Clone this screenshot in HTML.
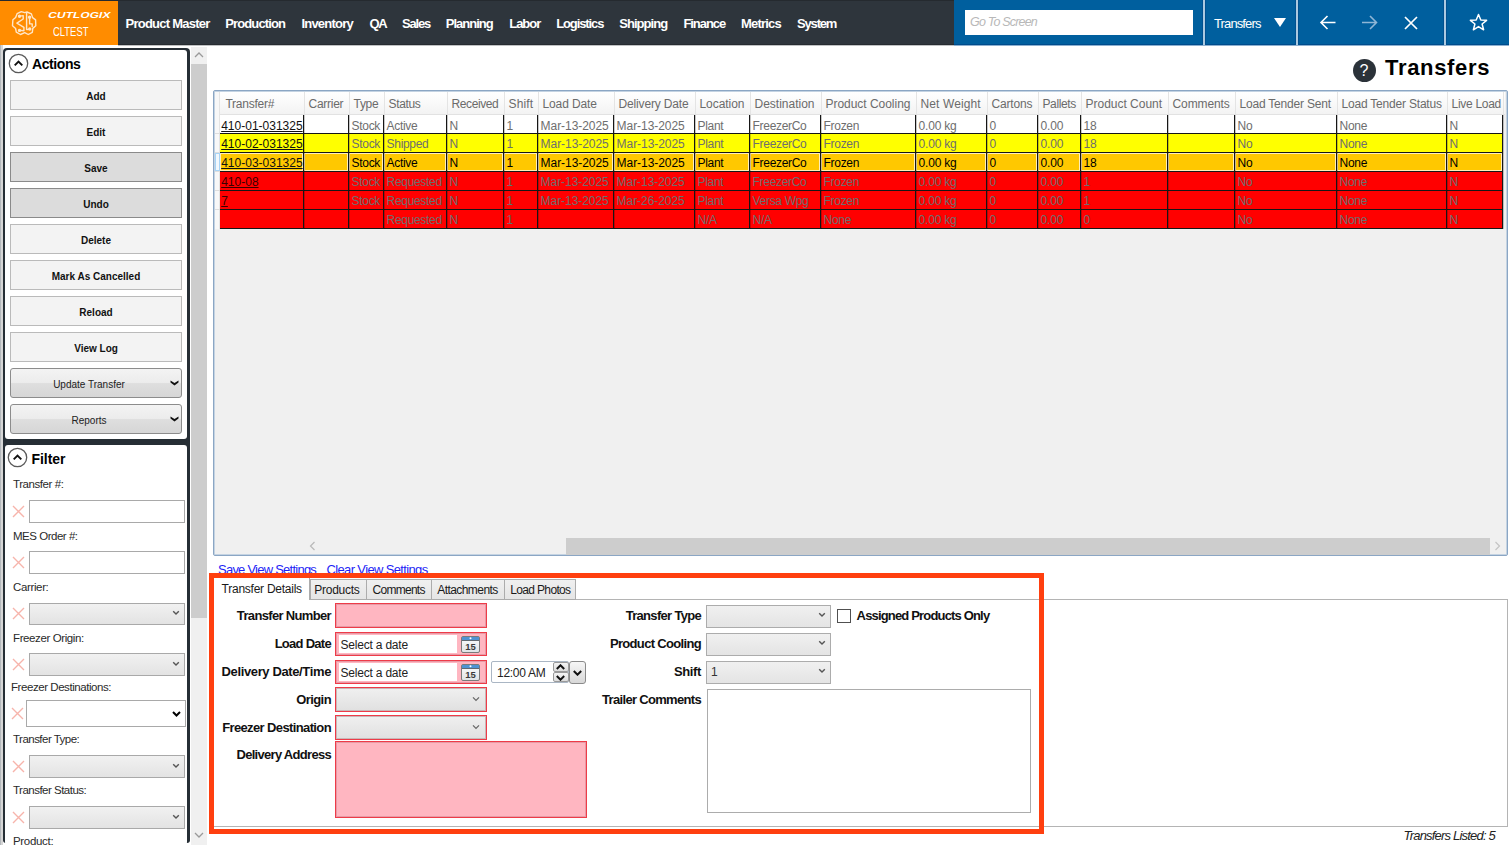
<!DOCTYPE html>
<html><head><meta charset="utf-8">
<style>
*{box-sizing:border-box;}
html,body{margin:0;padding:0;}
body{width:1509px;height:845px;position:relative;overflow:hidden;background:#fff;font-family:"Liberation Sans",sans-serif;color:#000;}
.a{position:absolute;}
.t{position:absolute;white-space:nowrap;}
.nav{position:absolute;top:16px;color:#fff;font-weight:bold;font-size:13px;white-space:nowrap;line-height:15px;}
.btn{position:absolute;left:10px;width:172px;height:30px;background:#f3f3f3;border:1px solid #bababa;font-size:10px;font-weight:bold;text-align:center;line-height:31px;color:#111;}
.btn.dk{background:#dcdcdc;border-color:#8a8a8a;}
.btn.dd{background:linear-gradient(#f3f3f3 0%,#ececec 48%,#dedede 52%,#d6d6d6 100%);border-color:#8c8c8c;border-radius:3px;font-weight:normal;color:#222;}
.flab{position:absolute;font-size:11.5px;letter-spacing:-0.3px;color:#2a2a2a;white-space:nowrap;line-height:13px;}
.finp{position:absolute;left:29px;width:156px;height:23px;border:1px solid #a9a9a9;background:#fff;}
.fcmb{position:absolute;left:29px;width:156px;height:23px;border:1px solid #a9a9a9;background:linear-gradient(#f1f1f1,#e3e3e3);}
.gt{position:absolute;font-size:12px;line-height:14px;white-space:nowrap;letter-spacing:-0.2px;}
.lblb{position:absolute;font-weight:bold;font-size:13px;white-space:nowrap;line-height:15px;color:#111;}
</style></head>
<body>
<div class="a" style="left:0;top:0;width:1509px;height:45px;background:#2e353c;"></div>
<div class="a" style="left:0;top:0;width:954px;height:1px;background:#252a2f;"></div>
<div class="a" style="left:0;top:44px;width:954px;height:1px;background:#262b30;"></div>
<div class="a" style="left:118px;top:45px;width:836px;height:1px;background:rgba(46,53,60,0.3);"></div>
<div class="a" style="left:954px;top:45px;width:555px;height:1px;background:rgba(0,80,150,0.45);"></div>
<div class="a" style="left:0;top:1px;width:118px;height:43.5px;background:#ff8c00;"></div>
<div class="a" style="left:954px;top:0;width:555px;height:45px;background:#005f9e;"></div>
<div class="a" style="left:954px;top:44px;width:555px;height:1px;background:#004c8c;"></div>
<svg class="a" style="left:8px;top:8px;" width="32" height="32" viewBox="0 0 32 32" fill="none" stroke="#ffe6c8" stroke-width="1.4" stroke-linejoin="round" stroke-linecap="round">
<path d="M16.7 4.6 L13.3 3.6 L9.1 5.7 L7.6 9.5 L4.9 11.7 L4.5 17.8 L7.6 20.5 L8.3 24.2 L12.5 26.5 L16.7 24.6 L20.3 26.5 L24.3 24.4 L24.8 20.4 L27.8 17.8 L27.6 11.9 L24.6 9.6 L23.4 5.9 L19 4 Z"/>
<path d="M11.7 8.1 L15.2 7.6 L15.2 11 L8.9 15.2 L15.9 19.3 L15.9 22.7 L11.7 22.4"/>
<path d="M18.6 4.8 L18.6 21.6 L21.6 21.2"/>
<path d="M21.6 9.5 L21.6 15.9 L24.2 15.9 L24.2 18.5"/>
<circle cx="11.5" cy="8.2" r="1" fill="#ffe6c8"/><circle cx="11.5" cy="22.4" r="1" fill="#ffe6c8"/><circle cx="21.6" cy="9.3" r="1" fill="#ffe6c8"/><circle cx="21.8" cy="21" r="1" fill="#ffe6c8"/>
</svg>
<div class="t" style="left:47px;top:10px;font-size:8.6px;font-weight:bold;color:#fff;line-height:10px;transform:scaleX(1.375) skewX(-12deg);transform-origin:0 100%;letter-spacing:0.1px;">CUTLOGIX</div>
<div class="t" style="left:52.5px;top:25px;font-size:13px;color:#fff;line-height:14px;transform:scaleX(0.725);transform-origin:0 0;">CLTEST</div>
<div class="nav" id="n1" style="left:125.5px;letter-spacing:-0.76px;">Product Master</div>
<div class="nav" id="n2" style="left:225.3px;letter-spacing:-0.89px;">Production</div>
<div class="nav" id="n3" style="left:301.4px;letter-spacing:-0.77px;">Inventory</div>
<div class="nav" id="n4" style="left:369.4px;letter-spacing:-1.20px;">QA</div>
<div class="nav" id="n5" style="left:402.0px;letter-spacing:-1.20px;">Sales</div>
<div class="nav" id="n6" style="left:445.7px;letter-spacing:-0.98px;">Planning</div>
<div class="nav" id="n7" style="left:509.2px;letter-spacing:-1.00px;">Labor</div>
<div class="nav" id="n8" style="left:556.2px;letter-spacing:-1.11px;">Logistics</div>
<div class="nav" id="n9" style="left:619.2px;letter-spacing:-0.95px;">Shipping</div>
<div class="nav" id="n10" style="left:683.4px;letter-spacing:-1.05px;">Finance</div>
<div class="nav" id="n11" style="left:741.1px;letter-spacing:-0.82px;">Metrics</div>
<div class="nav" id="n12" style="left:797.1px;letter-spacing:-1.19px;">System</div>
<div class="a" style="left:965px;top:10px;width:228px;height:25px;background:#fff;"></div>
<div class="t" id="gts" style="left:970px;top:15px;font-size:12.5px;font-style:italic;color:#b8b8b8;line-height:14px;letter-spacing:-0.81px;">Go To Screen</div>
<div class="a" style="left:1203px;top:0;width:2px;height:45px;background:#abc9e0;box-shadow:-1px 0 0 #00508f,1px 0 0 #00508f;"></div>
<div class="a" style="left:1296px;top:0;width:2px;height:45px;background:#abc9e0;box-shadow:-1px 0 0 #00508f,1px 0 0 #00508f;"></div>
<div class="a" style="left:1444px;top:0;width:2px;height:45px;background:#abc9e0;box-shadow:-1px 0 0 #00508f,1px 0 0 #00508f;"></div>
<div class="t" id="tr1" style="left:1214px;top:16px;font-size:13px;color:#fff;line-height:15px;letter-spacing:-0.88px;">Transfers</div>
<svg class="a" style="left:1274px;top:18px;" width="12" height="9" viewBox="0 0 12 9"><path d="M0 0 L12 0 L6 9 Z" fill="#fff"/></svg>
<svg class="a" style="left:1319px;top:14px;" width="18" height="17" viewBox="0 0 18 17" fill="none" stroke="#fff" stroke-width="1.6"><path d="M16.5 8.5 L2 8.5 M8.5 2 L2 8.5 L8.5 15"/></svg>
<svg class="a" style="left:1361px;top:14px;" width="18" height="17" viewBox="0 0 18 17" fill="none" stroke="#8fb6d6" stroke-width="1.6"><path d="M1 8.5 L15.5 8.5 M9 2 L15.5 8.5 L9 15"/></svg>
<svg class="a" style="left:1403px;top:15px;" width="16" height="16" viewBox="0 0 16 16" fill="none" stroke="#fff" stroke-width="1.7"><path d="M2 2 L14 14 M14 2 L2 14"/></svg>
<svg class="a" style="left:1469px;top:13px;" width="19" height="19" viewBox="0 0 19 19" fill="none" stroke="#fff" stroke-width="1.5" stroke-linejoin="round"><path d="M9.5 1.5 L11.8 7 L17.6 7.3 L13.1 11 L14.6 16.8 L9.5 13.6 L4.4 16.8 L5.9 11 L1.4 7.3 L7.2 7 Z"/></svg>
<div class="a" style="left:0;top:45px;width:1px;height:800px;background:#b4b8bc;"></div>
<div class="a" style="left:1px;top:45px;width:2px;height:800px;background:#d6d6d6;"></div>
<div class="a" style="left:3px;top:48px;width:187px;height:795px;background:#262e35;border-radius:4px 4px 3px 3px;"></div>
<div class="a" style="left:5px;top:50px;width:182px;height:389px;background:#fff;border-radius:3px;"></div>
<div class="a" style="left:5px;top:445px;width:182px;height:400px;background:#fff;border-radius:3px;"></div>
<div class="a" style="left:191px;top:47px;width:16px;height:798px;background:#f0f0f0;"></div>
<div class="a" style="left:191px;top:64px;width:16px;height:554px;background:#cdcdcd;"></div>
<svg class="a" style="left:194px;top:51px;" width="10" height="7" viewBox="0 0 10 7"><path d="M1 6 L5 2 L9 6" fill="none" stroke="#9a9a9a" stroke-width="1.3"/></svg>
<svg class="a" style="left:194px;top:832px;" width="10" height="7" viewBox="0 0 10 7"><path d="M1 1 L5 5 L9 1" fill="none" stroke="#9a9a9a" stroke-width="1.3"/></svg>
<svg class="a" style="left:7.5px;top:52.5px;" width="21" height="21" viewBox="0 0 21 21"><circle cx="10.5" cy="10.5" r="9.2" fill="none" stroke="#5a5a5a" stroke-width="1.3"/><path d="M6.7 12.3 L10.5 8.5 L14.3 12.3" fill="none" stroke="#111" stroke-width="1.9"/></svg>
<div class="t" id="act" style="left:32px;top:56px;font-size:14px;font-weight:bold;line-height:16px;letter-spacing:-0.41px;">Actions</div>
<div class="btn" style="top:80px;">Add</div>
<div class="btn" style="top:116px;">Edit</div>
<div class="btn dk" style="top:152px;">Save</div>
<div class="btn dk" style="top:188px;">Undo</div>
<div class="btn" style="top:224px;">Delete</div>
<div class="btn" style="top:260px;">Mark As Cancelled</div>
<div class="btn" style="top:296px;">Reload</div>
<div class="btn" style="top:332px;">View Log</div>
<div class="btn dd" style="top:368px;padding-right:14px;">Update Transfer</div>
<svg class="a" style="left:170px;top:380px;" width="9" height="6" viewBox="0 0 9 6"><path d="M0.5 0.5 L4.5 3 L8.5 0.5 L8.5 2.5 L4.5 5.5 L0.5 2.5 Z" fill="#111"/></svg>
<div class="btn dd" style="top:404px;padding-right:14px;">Reports</div>
<svg class="a" style="left:170px;top:416px;" width="9" height="6" viewBox="0 0 9 6"><path d="M0.5 0.5 L4.5 3 L8.5 0.5 L8.5 2.5 L4.5 5.5 L0.5 2.5 Z" fill="#111"/></svg>
<svg class="a" style="left:7.0px;top:447.0px;" width="21" height="21" viewBox="0 0 21 21"><circle cx="10.5" cy="10.5" r="9.2" fill="none" stroke="#5a5a5a" stroke-width="1.3"/><path d="M6.7 12.3 L10.5 8.5 L14.3 12.3" fill="none" stroke="#111" stroke-width="1.9"/></svg>
<div class="t" id="flt" style="left:31.5px;top:450.5px;font-size:14px;font-weight:bold;line-height:16px;letter-spacing:-0.06px;">Filter</div>
<div class="flab" id="fl480" style="left:13px;top:478.1px;letter-spacing:-0.43px;">Transfer #:</div>
<div class="finp" style="top:500.0px;height:23.0px;"></div>
<svg class="a" style="left:12px;top:505px;" width="13" height="13" viewBox="0 0 13 13"><path d="M1 1 L12 12 M12 1 L1 12" stroke="#f7b4ab" stroke-width="1.4"/></svg>
<div class="flab" id="fl532" style="left:13px;top:529.5px;letter-spacing:-0.48px;">MES Order #:</div>
<div class="finp" style="top:551.0px;height:23.0px;"></div>
<svg class="a" style="left:12px;top:556px;" width="13" height="13" viewBox="0 0 13 13"><path d="M1 1 L12 12 M12 1 L1 12" stroke="#f7b4ab" stroke-width="1.4"/></svg>
<div class="flab" id="fl583" style="left:13px;top:581.0px;letter-spacing:-0.36px;">Carrier:</div>
<div class="fcmb" style="top:602.5px;height:22.5px;"></div>
<svg class="a" style="left:172px;top:610px;" width="8" height="6" viewBox="0 0 8 6"><path d="M1.2 1.2 L4 4 L6.8 1.2" fill="none" stroke="#555" stroke-width="1.4"/></svg>
<svg class="a" style="left:12px;top:607px;" width="13" height="13" viewBox="0 0 13 13"><path d="M1 1 L12 12 M12 1 L1 12" stroke="#f7b4ab" stroke-width="1.4"/></svg>
<div class="flab" id="fl634" style="left:13px;top:631.5px;letter-spacing:-0.39px;">Freezer Origin:</div>
<div class="fcmb" style="top:653.0px;height:22.5px;"></div>
<svg class="a" style="left:172px;top:661px;" width="8" height="6" viewBox="0 0 8 6"><path d="M1.2 1.2 L4 4 L6.8 1.2" fill="none" stroke="#555" stroke-width="1.4"/></svg>
<svg class="a" style="left:12px;top:658px;" width="13" height="13" viewBox="0 0 13 13"><path d="M1 1 L12 12 M12 1 L1 12" stroke="#f7b4ab" stroke-width="1.4"/></svg>
<div class="flab" id="fl683" style="left:11px;top:680.5px;letter-spacing:-0.44px;">Freezer Destinations:</div>
<div class="finp" style="left:25.5px;width:160px;top:700.0px;height:26.5px;"></div>
<svg class="a" style="left:172px;top:711px;" width="9" height="6" viewBox="0 0 9 6"><path d="M1 1 L4.5 4.5 L8 1" fill="none" stroke="#000" stroke-width="2"/></svg>
<svg class="a" style="left:11px;top:707px;" width="13" height="13" viewBox="0 0 13 13"><path d="M1 1 L12 12 M12 1 L1 12" stroke="#f7b4ab" stroke-width="1.4"/></svg>
<div class="flab" id="fl735" style="left:13px;top:733.2px;letter-spacing:-0.52px;">Transfer Type:</div>
<div class="fcmb" style="top:755.0px;height:22.5px;"></div>
<svg class="a" style="left:172px;top:763px;" width="8" height="6" viewBox="0 0 8 6"><path d="M1.2 1.2 L4 4 L6.8 1.2" fill="none" stroke="#555" stroke-width="1.4"/></svg>
<svg class="a" style="left:12px;top:760px;" width="13" height="13" viewBox="0 0 13 13"><path d="M1 1 L12 12 M12 1 L1 12" stroke="#f7b4ab" stroke-width="1.4"/></svg>
<div class="flab" id="fl786" style="left:13px;top:784.3px;letter-spacing:-0.51px;">Transfer Status:</div>
<div class="fcmb" style="top:806.0px;height:22.5px;"></div>
<svg class="a" style="left:172px;top:814px;" width="8" height="6" viewBox="0 0 8 6"><path d="M1.2 1.2 L4 4 L6.8 1.2" fill="none" stroke="#555" stroke-width="1.4"/></svg>
<svg class="a" style="left:12px;top:811px;" width="13" height="13" viewBox="0 0 13 13"><path d="M1 1 L12 12 M12 1 L1 12" stroke="#f7b4ab" stroke-width="1.4"/></svg>
<div class="flab" id="fl837" style="left:13px;top:834.5px;letter-spacing:-0.32px;">Product:</div>
<div class="a" style="left:1352.5px;top:58.5px;width:23px;height:23px;border-radius:50%;background:#2b3239;color:#fff;font-size:16px;text-align:center;line-height:23px;">?</div>
<div class="t" id="ttl" style="left:1385px;top:56px;font-size:22px;font-weight:bold;line-height:24px;letter-spacing:0.68px;">Transfers</div>
<div class="a" style="left:213px;top:90px;width:1295px;height:466px;border:1px solid #8ba6c4;border-radius:2px;background:#f0f0f0;box-shadow:inset 0 0 0 1px #c4d3e2;"></div>
<div class="a" style="left:215px;top:92px;width:1290px;height:23px;background:linear-gradient(#ffffff,#f3f3f3);border-bottom:1px solid #e2e2e2;"></div>
<div class="a" style="left:215px;top:92px;width:5px;height:137px;background:#f8f8f8;border-right:1px solid #e4e4e4;"></div>
<div class="a" style="left:304px;top:92px;width:1px;height:22px;background:#e4e4e4;"></div>
<div class="gt" id="h0" style="left:225.5px;top:97px;color:#6b6b6b;letter-spacing:-0.26px;">Transfer#</div>
<div class="a" style="left:349px;top:92px;width:1px;height:22px;background:#e4e4e4;"></div>
<div class="gt" id="h1" style="left:308.5px;top:97px;color:#6b6b6b;letter-spacing:-0.27px;">Carrier</div>
<div class="a" style="left:384px;top:92px;width:1px;height:22px;background:#e4e4e4;"></div>
<div class="gt" id="h2" style="left:353.5px;top:97px;color:#6b6b6b;letter-spacing:-0.28px;">Type</div>
<div class="a" style="left:447px;top:92px;width:1px;height:22px;background:#e4e4e4;"></div>
<div class="gt" id="h3" style="left:388.5px;top:97px;color:#6b6b6b;letter-spacing:-0.34px;">Status</div>
<div class="a" style="left:504px;top:92px;width:1px;height:22px;background:#e4e4e4;"></div>
<div class="gt" id="h4" style="left:451.5px;top:97px;color:#6b6b6b;letter-spacing:-0.40px;">Received</div>
<div class="a" style="left:538px;top:92px;width:1px;height:22px;background:#e4e4e4;"></div>
<div class="gt" id="h5" style="left:508.5px;top:97px;color:#6b6b6b;letter-spacing:0.14px;">Shift</div>
<div class="a" style="left:614px;top:92px;width:1px;height:22px;background:#e4e4e4;"></div>
<div class="gt" id="h6" style="left:542.5px;top:97px;color:#6b6b6b;letter-spacing:-0.13px;">Load Date</div>
<div class="a" style="left:695px;top:92px;width:1px;height:22px;background:#e4e4e4;"></div>
<div class="gt" id="h7" style="left:618.5px;top:97px;color:#6b6b6b;letter-spacing:-0.15px;">Delivery Date</div>
<div class="a" style="left:750px;top:92px;width:1px;height:22px;background:#e4e4e4;"></div>
<div class="gt" id="h8" style="left:699.5px;top:97px;color:#6b6b6b;letter-spacing:-0.06px;">Location</div>
<div class="a" style="left:821px;top:92px;width:1px;height:22px;background:#e4e4e4;"></div>
<div class="gt" id="h9" style="left:754.5px;top:97px;color:#6b6b6b;letter-spacing:0.00px;">Destination</div>
<div class="a" style="left:916px;top:92px;width:1px;height:22px;background:#e4e4e4;"></div>
<div class="gt" id="h10" style="left:825.5px;top:97px;color:#6b6b6b;letter-spacing:-0.03px;">Product Cooling</div>
<div class="a" style="left:987px;top:92px;width:1px;height:22px;background:#e4e4e4;"></div>
<div class="gt" id="h11" style="left:920.5px;top:97px;color:#6b6b6b;letter-spacing:0.11px;">Net Weight</div>
<div class="a" style="left:1038px;top:92px;width:1px;height:22px;background:#e4e4e4;"></div>
<div class="gt" id="h12" style="left:991.5px;top:97px;color:#6b6b6b;letter-spacing:-0.19px;">Cartons</div>
<div class="a" style="left:1081px;top:92px;width:1px;height:22px;background:#e4e4e4;"></div>
<div class="gt" id="h13" style="left:1042.5px;top:97px;color:#6b6b6b;letter-spacing:-0.39px;">Pallets</div>
<div class="a" style="left:1168px;top:92px;width:1px;height:22px;background:#e4e4e4;"></div>
<div class="gt" id="h14" style="left:1085.5px;top:97px;color:#6b6b6b;letter-spacing:-0.01px;">Product Count</div>
<div class="a" style="left:1235px;top:92px;width:1px;height:22px;background:#e4e4e4;"></div>
<div class="gt" id="h15" style="left:1172.5px;top:97px;color:#6b6b6b;letter-spacing:-0.10px;">Comments</div>
<div class="a" style="left:1337px;top:92px;width:1px;height:22px;background:#e4e4e4;"></div>
<div class="gt" id="h16" style="left:1239.5px;top:97px;color:#6b6b6b;letter-spacing:-0.20px;">Load Tender Sent</div>
<div class="a" style="left:1447px;top:92px;width:1px;height:22px;background:#e4e4e4;"></div>
<div class="gt" id="h17" style="left:1341.5px;top:97px;color:#6b6b6b;letter-spacing:-0.20px;">Load Tender Status</div>
<div class="a" style="left:1503px;top:92px;width:1px;height:22px;background:#e4e4e4;"></div>
<div class="gt" id="h18" style="left:1451.5px;top:97px;color:#6b6b6b;letter-spacing:-0.29px;">Live Load</div>
<div class="a" style="left:220px;top:115px;width:1283px;height:18px;background:#ffffff;"></div>
<div class="gt" style="left:221.2px;top:119px;color:#111;text-decoration:underline;letter-spacing:0;">410-01-031325</div>
<div class="gt" style="left:351.6px;top:119px;color:#6e6e6e;letter-spacing:-0.32px;">Stock</div>
<div class="gt" style="left:386.6px;top:119px;color:#6e6e6e;letter-spacing:-0.32px;">Active</div>
<div class="gt" style="left:449.6px;top:119px;color:#6e6e6e;letter-spacing:-0.32px;">N</div>
<div class="gt" style="left:506.6px;top:119px;color:#6e6e6e;letter-spacing:-0.20px;">1</div>
<div class="gt" style="left:540.6px;top:119px;color:#6e6e6e;letter-spacing:-0.05px;">Mar-13-2025</div>
<div class="gt" style="left:616.6px;top:119px;color:#6e6e6e;letter-spacing:-0.05px;">Mar-13-2025</div>
<div class="gt" style="left:697.6px;top:119px;color:#6e6e6e;letter-spacing:-0.32px;">Plant</div>
<div class="gt" style="left:752.6px;top:119px;color:#6e6e6e;letter-spacing:-0.32px;">FreezerCo</div>
<div class="gt" style="left:823.6px;top:119px;color:#6e6e6e;letter-spacing:-0.32px;">Frozen</div>
<div class="gt" style="left:918.6px;top:119px;color:#6e6e6e;letter-spacing:-0.20px;">0.00 kg</div>
<div class="gt" style="left:989.6px;top:119px;color:#6e6e6e;letter-spacing:-0.20px;">0</div>
<div class="gt" style="left:1040.6px;top:119px;color:#6e6e6e;letter-spacing:-0.20px;">0.00</div>
<div class="gt" style="left:1083.6px;top:119px;color:#6e6e6e;letter-spacing:-0.20px;">18</div>
<div class="gt" style="left:1237.6px;top:119px;color:#6e6e6e;letter-spacing:-0.32px;">No</div>
<div class="gt" style="left:1339.6px;top:119px;color:#6e6e6e;letter-spacing:-0.32px;">None</div>
<div class="gt" style="left:1449.6px;top:119px;color:#6e6e6e;letter-spacing:-0.32px;">N</div>
<div class="a" style="left:220px;top:134px;width:1283px;height:18px;background:#ffff00;"></div>
<div class="gt" style="left:221.2px;top:137px;color:#111;text-decoration:underline;letter-spacing:0;">410-02-031325</div>
<div class="gt" style="left:351.6px;top:137px;color:#6e6e6e;letter-spacing:-0.32px;">Stock</div>
<div class="gt" style="left:386.6px;top:137px;color:#6e6e6e;letter-spacing:-0.32px;">Shipped</div>
<div class="gt" style="left:449.6px;top:137px;color:#6e6e6e;letter-spacing:-0.32px;">N</div>
<div class="gt" style="left:506.6px;top:137px;color:#6e6e6e;letter-spacing:-0.20px;">1</div>
<div class="gt" style="left:540.6px;top:137px;color:#6e6e6e;letter-spacing:-0.05px;">Mar-13-2025</div>
<div class="gt" style="left:616.6px;top:137px;color:#6e6e6e;letter-spacing:-0.05px;">Mar-13-2025</div>
<div class="gt" style="left:697.6px;top:137px;color:#6e6e6e;letter-spacing:-0.32px;">Plant</div>
<div class="gt" style="left:752.6px;top:137px;color:#6e6e6e;letter-spacing:-0.32px;">FreezerCo</div>
<div class="gt" style="left:823.6px;top:137px;color:#6e6e6e;letter-spacing:-0.32px;">Frozen</div>
<div class="gt" style="left:918.6px;top:137px;color:#6e6e6e;letter-spacing:-0.20px;">0.00 kg</div>
<div class="gt" style="left:989.6px;top:137px;color:#6e6e6e;letter-spacing:-0.20px;">0</div>
<div class="gt" style="left:1040.6px;top:137px;color:#6e6e6e;letter-spacing:-0.20px;">0.00</div>
<div class="gt" style="left:1083.6px;top:137px;color:#6e6e6e;letter-spacing:-0.20px;">18</div>
<div class="gt" style="left:1237.6px;top:137px;color:#6e6e6e;letter-spacing:-0.32px;">No</div>
<div class="gt" style="left:1339.6px;top:137px;color:#6e6e6e;letter-spacing:-0.32px;">None</div>
<div class="gt" style="left:1449.6px;top:137px;color:#6e6e6e;letter-spacing:-0.32px;">N</div>
<div class="a" style="left:220px;top:153px;width:1283px;height:18px;background:#ffc800;"></div>
<div class="a" style="left:220px;top:153px;width:83px;height:18px;border:1px solid #ffeebb;"></div>
<div class="a" style="left:304px;top:153px;width:44px;height:18px;border:1px solid #ffeebb;"></div>
<div class="a" style="left:349px;top:153px;width:34px;height:18px;border:1px solid #ffeebb;"></div>
<div class="a" style="left:384px;top:153px;width:62px;height:18px;border:1px solid #ffeebb;"></div>
<div class="a" style="left:447px;top:153px;width:56px;height:18px;border:1px solid #ffeebb;"></div>
<div class="a" style="left:504px;top:153px;width:33px;height:18px;border:1px solid #ffeebb;"></div>
<div class="a" style="left:538px;top:153px;width:75px;height:18px;border:1px solid #ffeebb;"></div>
<div class="a" style="left:614px;top:153px;width:80px;height:18px;border:1px solid #ffeebb;"></div>
<div class="a" style="left:695px;top:153px;width:54px;height:18px;border:1px solid #ffeebb;"></div>
<div class="a" style="left:750px;top:153px;width:70px;height:18px;border:1px solid #ffeebb;"></div>
<div class="a" style="left:821px;top:153px;width:94px;height:18px;border:1px solid #ffeebb;"></div>
<div class="a" style="left:916px;top:153px;width:70px;height:18px;border:1px solid #ffeebb;"></div>
<div class="a" style="left:987px;top:153px;width:50px;height:18px;border:1px solid #ffeebb;"></div>
<div class="a" style="left:1038px;top:153px;width:42px;height:18px;border:1px solid #ffeebb;"></div>
<div class="a" style="left:1081px;top:153px;width:86px;height:18px;border:1px solid #ffeebb;"></div>
<div class="a" style="left:1168px;top:153px;width:66px;height:18px;border:1px solid #ffeebb;"></div>
<div class="a" style="left:1235px;top:153px;width:101px;height:18px;border:1px solid #ffeebb;"></div>
<div class="a" style="left:1337px;top:153px;width:109px;height:18px;border:1px solid #ffeebb;"></div>
<div class="a" style="left:1447px;top:153px;width:55px;height:18px;border:1px solid #ffeebb;"></div>
<div class="gt" style="left:221.2px;top:156px;color:#111;text-decoration:underline;letter-spacing:0;">410-03-031325</div>
<div class="gt" style="left:351.6px;top:156px;color:#000;letter-spacing:-0.32px;">Stock</div>
<div class="gt" style="left:386.6px;top:156px;color:#000;letter-spacing:-0.32px;">Active</div>
<div class="gt" style="left:449.6px;top:156px;color:#000;letter-spacing:-0.32px;">N</div>
<div class="gt" style="left:506.6px;top:156px;color:#000;letter-spacing:-0.20px;">1</div>
<div class="gt" style="left:540.6px;top:156px;color:#000;letter-spacing:-0.05px;">Mar-13-2025</div>
<div class="gt" style="left:616.6px;top:156px;color:#000;letter-spacing:-0.05px;">Mar-13-2025</div>
<div class="gt" style="left:697.6px;top:156px;color:#000;letter-spacing:-0.32px;">Plant</div>
<div class="gt" style="left:752.6px;top:156px;color:#000;letter-spacing:-0.32px;">FreezerCo</div>
<div class="gt" style="left:823.6px;top:156px;color:#000;letter-spacing:-0.32px;">Frozen</div>
<div class="gt" style="left:918.6px;top:156px;color:#000;letter-spacing:-0.20px;">0.00 kg</div>
<div class="gt" style="left:989.6px;top:156px;color:#000;letter-spacing:-0.20px;">0</div>
<div class="gt" style="left:1040.6px;top:156px;color:#000;letter-spacing:-0.20px;">0.00</div>
<div class="gt" style="left:1083.6px;top:156px;color:#000;letter-spacing:-0.20px;">18</div>
<div class="gt" style="left:1237.6px;top:156px;color:#000;letter-spacing:-0.32px;">No</div>
<div class="gt" style="left:1339.6px;top:156px;color:#000;letter-spacing:-0.32px;">None</div>
<div class="gt" style="left:1449.6px;top:156px;color:#000;letter-spacing:-0.32px;">N</div>
<div class="a" style="left:220px;top:172px;width:1283px;height:18px;background:#ff0000;"></div>
<div class="gt" style="left:221.2px;top:175px;color:#3a0000;text-decoration:underline;letter-spacing:0;">410-08</div>
<div class="gt" style="left:351.6px;top:175px;color:#6e6e6e;letter-spacing:-0.32px;">Stock</div>
<div class="gt" style="left:386.6px;top:175px;color:#6e6e6e;letter-spacing:-0.32px;">Requested</div>
<div class="gt" style="left:449.6px;top:175px;color:#6e6e6e;letter-spacing:-0.32px;">N</div>
<div class="gt" style="left:506.6px;top:175px;color:#6e6e6e;letter-spacing:-0.20px;">1</div>
<div class="gt" style="left:540.6px;top:175px;color:#6e6e6e;letter-spacing:-0.05px;">Mar-13-2025</div>
<div class="gt" style="left:616.6px;top:175px;color:#6e6e6e;letter-spacing:-0.05px;">Mar-13-2025</div>
<div class="gt" style="left:697.6px;top:175px;color:#6e6e6e;letter-spacing:-0.32px;">Plant</div>
<div class="gt" style="left:752.6px;top:175px;color:#6e6e6e;letter-spacing:-0.32px;">FreezerCo</div>
<div class="gt" style="left:823.6px;top:175px;color:#6e6e6e;letter-spacing:-0.32px;">Frozen</div>
<div class="gt" style="left:918.6px;top:175px;color:#6e6e6e;letter-spacing:-0.20px;">0.00 kg</div>
<div class="gt" style="left:989.6px;top:175px;color:#6e6e6e;letter-spacing:-0.20px;">0</div>
<div class="gt" style="left:1040.6px;top:175px;color:#6e6e6e;letter-spacing:-0.20px;">0.00</div>
<div class="gt" style="left:1083.6px;top:175px;color:#6e6e6e;letter-spacing:-0.20px;">1</div>
<div class="gt" style="left:1237.6px;top:175px;color:#6e6e6e;letter-spacing:-0.32px;">No</div>
<div class="gt" style="left:1339.6px;top:175px;color:#6e6e6e;letter-spacing:-0.32px;">None</div>
<div class="gt" style="left:1449.6px;top:175px;color:#6e6e6e;letter-spacing:-0.32px;">N</div>
<div class="a" style="left:220px;top:191px;width:1283px;height:18px;background:#ff0000;"></div>
<div class="gt" style="left:221.2px;top:194px;color:#3a0000;text-decoration:underline;letter-spacing:0;">7</div>
<div class="gt" style="left:351.6px;top:194px;color:#6e6e6e;letter-spacing:-0.32px;">Stock</div>
<div class="gt" style="left:386.6px;top:194px;color:#6e6e6e;letter-spacing:-0.32px;">Requested</div>
<div class="gt" style="left:449.6px;top:194px;color:#6e6e6e;letter-spacing:-0.32px;">N</div>
<div class="gt" style="left:506.6px;top:194px;color:#6e6e6e;letter-spacing:-0.20px;">1</div>
<div class="gt" style="left:540.6px;top:194px;color:#6e6e6e;letter-spacing:-0.05px;">Mar-13-2025</div>
<div class="gt" style="left:616.6px;top:194px;color:#6e6e6e;letter-spacing:-0.05px;">Mar-26-2025</div>
<div class="gt" style="left:697.6px;top:194px;color:#6e6e6e;letter-spacing:-0.32px;">Plant</div>
<div class="gt" style="left:752.6px;top:194px;color:#6e6e6e;letter-spacing:-0.32px;">Versa Wpg</div>
<div class="gt" style="left:823.6px;top:194px;color:#6e6e6e;letter-spacing:-0.32px;">Frozen</div>
<div class="gt" style="left:918.6px;top:194px;color:#6e6e6e;letter-spacing:-0.20px;">0.00 kg</div>
<div class="gt" style="left:989.6px;top:194px;color:#6e6e6e;letter-spacing:-0.20px;">0</div>
<div class="gt" style="left:1040.6px;top:194px;color:#6e6e6e;letter-spacing:-0.20px;">0.00</div>
<div class="gt" style="left:1083.6px;top:194px;color:#6e6e6e;letter-spacing:-0.20px;">1</div>
<div class="gt" style="left:1237.6px;top:194px;color:#6e6e6e;letter-spacing:-0.32px;">No</div>
<div class="gt" style="left:1339.6px;top:194px;color:#6e6e6e;letter-spacing:-0.32px;">None</div>
<div class="gt" style="left:1449.6px;top:194px;color:#6e6e6e;letter-spacing:-0.32px;">N</div>
<div class="a" style="left:220px;top:210px;width:1283px;height:18px;background:#ff0000;"></div>
<div class="gt" style="left:386.6px;top:213px;color:#6e6e6e;letter-spacing:-0.32px;">Requested</div>
<div class="gt" style="left:449.6px;top:213px;color:#6e6e6e;letter-spacing:-0.32px;">N</div>
<div class="gt" style="left:506.6px;top:213px;color:#6e6e6e;letter-spacing:-0.20px;">1</div>
<div class="gt" style="left:697.6px;top:213px;color:#6e6e6e;letter-spacing:-0.32px;">N/A</div>
<div class="gt" style="left:752.6px;top:213px;color:#6e6e6e;letter-spacing:-0.32px;">N/A</div>
<div class="gt" style="left:823.6px;top:213px;color:#6e6e6e;letter-spacing:-0.32px;">None</div>
<div class="gt" style="left:918.6px;top:213px;color:#6e6e6e;letter-spacing:-0.20px;">0.00 kg</div>
<div class="gt" style="left:989.6px;top:213px;color:#6e6e6e;letter-spacing:-0.20px;">0</div>
<div class="gt" style="left:1040.6px;top:213px;color:#6e6e6e;letter-spacing:-0.20px;">0.00</div>
<div class="gt" style="left:1083.6px;top:213px;color:#6e6e6e;letter-spacing:-0.20px;">0</div>
<div class="gt" style="left:1237.6px;top:213px;color:#6e6e6e;letter-spacing:-0.32px;">No</div>
<div class="gt" style="left:1339.6px;top:213px;color:#6e6e6e;letter-spacing:-0.32px;">None</div>
<div class="gt" style="left:1449.6px;top:213px;color:#6e6e6e;letter-spacing:-0.32px;">N</div>
<div class="a" style="left:220px;top:133px;width:1283px;height:1px;background:#161616;"></div>
<div class="a" style="left:220px;top:152px;width:1283px;height:1px;background:#161616;"></div>
<div class="a" style="left:220px;top:171px;width:1283px;height:1px;background:#161616;"></div>
<div class="a" style="left:220px;top:190px;width:1283px;height:1px;background:#161616;"></div>
<div class="a" style="left:220px;top:209px;width:1283px;height:1px;background:#161616;"></div>
<div class="a" style="left:220px;top:228px;width:1283px;height:1px;background:#161616;"></div>
<div class="a" style="left:303px;top:115px;width:1px;height:114px;background:#161616;"></div>
<div class="a" style="left:304px;top:115px;width:1px;height:114px;background:rgba(0,0,0,0.22);"></div>
<div class="a" style="left:348px;top:115px;width:1px;height:114px;background:#161616;"></div>
<div class="a" style="left:349px;top:115px;width:1px;height:114px;background:rgba(0,0,0,0.22);"></div>
<div class="a" style="left:383px;top:115px;width:1px;height:114px;background:#161616;"></div>
<div class="a" style="left:384px;top:115px;width:1px;height:114px;background:rgba(0,0,0,0.22);"></div>
<div class="a" style="left:446px;top:115px;width:1px;height:114px;background:#161616;"></div>
<div class="a" style="left:447px;top:115px;width:1px;height:114px;background:rgba(0,0,0,0.22);"></div>
<div class="a" style="left:503px;top:115px;width:1px;height:114px;background:#161616;"></div>
<div class="a" style="left:504px;top:115px;width:1px;height:114px;background:rgba(0,0,0,0.22);"></div>
<div class="a" style="left:537px;top:115px;width:1px;height:114px;background:#161616;"></div>
<div class="a" style="left:538px;top:115px;width:1px;height:114px;background:rgba(0,0,0,0.22);"></div>
<div class="a" style="left:613px;top:115px;width:1px;height:114px;background:#161616;"></div>
<div class="a" style="left:614px;top:115px;width:1px;height:114px;background:rgba(0,0,0,0.22);"></div>
<div class="a" style="left:694px;top:115px;width:1px;height:114px;background:#161616;"></div>
<div class="a" style="left:695px;top:115px;width:1px;height:114px;background:rgba(0,0,0,0.22);"></div>
<div class="a" style="left:749px;top:115px;width:1px;height:114px;background:#161616;"></div>
<div class="a" style="left:750px;top:115px;width:1px;height:114px;background:rgba(0,0,0,0.22);"></div>
<div class="a" style="left:820px;top:115px;width:1px;height:114px;background:#161616;"></div>
<div class="a" style="left:821px;top:115px;width:1px;height:114px;background:rgba(0,0,0,0.22);"></div>
<div class="a" style="left:915px;top:115px;width:1px;height:114px;background:#161616;"></div>
<div class="a" style="left:916px;top:115px;width:1px;height:114px;background:rgba(0,0,0,0.22);"></div>
<div class="a" style="left:986px;top:115px;width:1px;height:114px;background:#161616;"></div>
<div class="a" style="left:987px;top:115px;width:1px;height:114px;background:rgba(0,0,0,0.22);"></div>
<div class="a" style="left:1037px;top:115px;width:1px;height:114px;background:#161616;"></div>
<div class="a" style="left:1038px;top:115px;width:1px;height:114px;background:rgba(0,0,0,0.22);"></div>
<div class="a" style="left:1080px;top:115px;width:1px;height:114px;background:#161616;"></div>
<div class="a" style="left:1081px;top:115px;width:1px;height:114px;background:rgba(0,0,0,0.22);"></div>
<div class="a" style="left:1167px;top:115px;width:1px;height:114px;background:#161616;"></div>
<div class="a" style="left:1168px;top:115px;width:1px;height:114px;background:rgba(0,0,0,0.22);"></div>
<div class="a" style="left:1234px;top:115px;width:1px;height:114px;background:#161616;"></div>
<div class="a" style="left:1235px;top:115px;width:1px;height:114px;background:rgba(0,0,0,0.22);"></div>
<div class="a" style="left:1336px;top:115px;width:1px;height:114px;background:#161616;"></div>
<div class="a" style="left:1337px;top:115px;width:1px;height:114px;background:rgba(0,0,0,0.22);"></div>
<div class="a" style="left:1446px;top:115px;width:1px;height:114px;background:#161616;"></div>
<div class="a" style="left:1447px;top:115px;width:1px;height:114px;background:rgba(0,0,0,0.22);"></div>
<div class="a" style="left:1502px;top:115px;width:1px;height:114px;background:#161616;"></div>
<div class="a" style="left:1503px;top:115px;width:1px;height:114px;background:rgba(0,0,0,0.22);"></div>
<div class="a" style="left:215px;top:133px;width:5px;height:1px;background:#dedede;"></div>
<div class="a" style="left:215px;top:152px;width:5px;height:1px;background:#dedede;"></div>
<div class="a" style="left:215px;top:171px;width:5px;height:1px;background:#dedede;"></div>
<div class="a" style="left:215px;top:190px;width:5px;height:1px;background:#dedede;"></div>
<div class="a" style="left:215px;top:209px;width:5px;height:1px;background:#dedede;"></div>
<div class="a" style="left:215px;top:153px;width:5px;height:18px;border:1px solid #a8d4f6;background:#f2f8fd;"></div>
<div class="a" style="left:566px;top:538px;width:924px;height:16.5px;background:#cdcdcd;"></div>
<svg class="a" style="left:309px;top:541px;" width="7" height="10" viewBox="0 0 7 10"><path d="M5.5 1 L1.5 5 L5.5 9" fill="none" stroke="#b8b8b8" stroke-width="1.2"/></svg>
<svg class="a" style="left:1494px;top:541px;" width="7" height="10" viewBox="0 0 7 10"><path d="M1.5 1 L5.5 5 L1.5 9" fill="none" stroke="#c4c4c4" stroke-width="1.2"/></svg>
<div class="t" id="lk1" style="left:218px;top:562px;font-size:13px;line-height:15px;color:#1f1ff5;text-decoration:underline;letter-spacing:-0.76px;">Save View Settings</div>
<div class="t" id="lk2" style="left:326.5px;top:562px;font-size:13px;line-height:15px;color:#1f1ff5;text-decoration:underline;letter-spacing:-0.64px;">Clear View Settings</div>
<div class="a" style="left:213px;top:599px;width:1295px;height:228px;border:1px solid #b4b4b4;background:#fff;"></div>
<div class="a" style="left:309.5px;top:579px;width:57.5px;height:21px;background:linear-gradient(#f0f0f0,#e5e5e5);border:1px solid #acacac;"></div>
<div class="t" id="tb0" style="left:314.3px;top:583px;font-size:12px;line-height:14px;color:#1a1a1a;letter-spacing:-0.26px;">Products</div>
<div class="a" style="left:366.0px;top:579px;width:66.0px;height:21px;background:linear-gradient(#f0f0f0,#e5e5e5);border:1px solid #acacac;"></div>
<div class="t" id="tb1" style="left:372.6px;top:583px;font-size:12px;line-height:14px;color:#1a1a1a;letter-spacing:-0.74px;">Comments</div>
<div class="a" style="left:431.0px;top:579px;width:74.0px;height:21px;background:linear-gradient(#f0f0f0,#e5e5e5);border:1px solid #acacac;"></div>
<div class="t" id="tb2" style="left:437.2px;top:583px;font-size:12px;line-height:14px;color:#1a1a1a;letter-spacing:-0.56px;">Attachments</div>
<div class="a" style="left:504.0px;top:579px;width:72.3px;height:21px;background:linear-gradient(#f0f0f0,#e5e5e5);border:1px solid #acacac;"></div>
<div class="t" id="tb3" style="left:510.3px;top:583px;font-size:12px;line-height:14px;color:#1a1a1a;letter-spacing:-0.66px;">Load Photos</div>
<div class="a" style="left:213px;top:577px;width:97px;height:23px;background:#fff;border:1px solid #acacac;border-bottom:none;"></div>
<div class="t" id="tbs" style="left:221.6px;top:582px;font-size:12px;line-height:14px;color:#1a1a1a;letter-spacing:-0.25px;">Transfer Details</div>
<div class="lblb" id="lb1" style="right:1178.0px;top:607.7px;letter-spacing:-0.66px;">Transfer Number</div>
<div class="lblb" id="lb2" style="right:1178.0px;top:635.7px;letter-spacing:-0.72px;">Load Date</div>
<div class="lblb" id="lb3" style="right:1178.0px;top:663.7px;letter-spacing:-0.37px;">Delivery Date/Time</div>
<div class="lblb" id="lb4" style="right:1178.0px;top:691.7px;letter-spacing:-0.58px;">Origin</div>
<div class="lblb" id="lb5" style="right:1178.0px;top:719.7px;letter-spacing:-0.62px;">Freezer Destination</div>
<div class="lblb" id="lb6" style="right:1178.0px;top:747.0px;letter-spacing:-0.70px;">Delivery Address</div>
<div class="lblb" id="rb1" style="right:808.0px;top:607.5px;letter-spacing:-0.69px;">Transfer Type</div>
<div class="lblb" id="rb2" style="right:808.0px;top:635.7px;letter-spacing:-0.67px;">Product Cooling</div>
<div class="lblb" id="rb3" style="right:808.0px;top:663.7px;letter-spacing:-0.38px;">Shift</div>
<div class="lblb" id="rb4" style="right:808.0px;top:691.7px;letter-spacing:-0.68px;">Trailer Comments</div>
<div class="lblb" id="apo" style="left:856.6px;top:607.5px;letter-spacing:-0.83px;">Assigned Products Only</div>
<div class="a" style="left:335.3px;top:603.2px;width:152.0px;height:25.0px;border:1.5px solid #ee3b48;background:#ffb6c1;box-shadow:inset 0 0 0 1px #e79aa6;"></div>
<div class="a" style="left:335.3px;top:631.5px;width:152.0px;height:24.5px;border:1.5px solid #ee3b48;background:#ffb6c1;box-shadow:inset 0 0 0 1px #e79aa6;"></div>
<div class="a" style="left:339px;top:634.8px;width:118px;height:18px;background:#fff;"></div>
<div class="t" id="sd631" style="left:340.5px;top:637.5px;font-size:12px;line-height:14px;color:#222;letter-spacing:-0.20px;">Select a date</div>
<svg class="a" style="left:460.5px;top:635.5px;" width="19" height="17" viewBox="0 0 19 17"><defs><linearGradient id="cb631" x1="0" y1="0" x2="0" y2="1"><stop offset="0" stop-color="#fdfdfd"/><stop offset="1" stop-color="#dfe3e6"/></linearGradient></defs><rect x="0.5" y="0.5" width="18" height="16" rx="1.5" fill="url(#cb631)" stroke="#7a7a7a"/><rect x="1" y="1" width="17" height="3.6" fill="#4f93d2"/><rect x="1" y="4.2" width="17" height="0.8" fill="#555"/><circle cx="9.5" cy="2.2" r="1" fill="#fff"/><text x="9.5" y="14.3" font-family="Liberation Sans" font-size="9.5" font-weight="bold" text-anchor="middle" fill="#3a3a3a">15</text></svg>
<div class="a" style="left:335.3px;top:659.6px;width:152.0px;height:24.5px;border:1.5px solid #ee3b48;background:#ffb6c1;box-shadow:inset 0 0 0 1px #e79aa6;"></div>
<div class="a" style="left:339px;top:662.9px;width:118px;height:18px;background:#fff;"></div>
<div class="t" id="sd659" style="left:340.5px;top:665.6px;font-size:12px;line-height:14px;color:#222;letter-spacing:-0.20px;">Select a date</div>
<svg class="a" style="left:460.5px;top:663.6px;" width="19" height="17" viewBox="0 0 19 17"><defs><linearGradient id="cb659" x1="0" y1="0" x2="0" y2="1"><stop offset="0" stop-color="#fdfdfd"/><stop offset="1" stop-color="#dfe3e6"/></linearGradient></defs><rect x="0.5" y="0.5" width="18" height="16" rx="1.5" fill="url(#cb659)" stroke="#7a7a7a"/><rect x="1" y="1" width="17" height="3.6" fill="#4f93d2"/><rect x="1" y="4.2" width="17" height="0.8" fill="#555"/><circle cx="9.5" cy="2.2" r="1" fill="#fff"/><text x="9.5" y="14.3" font-family="Liberation Sans" font-size="9.5" font-weight="bold" text-anchor="middle" fill="#3a3a3a">15</text></svg>
<div class="a" style="left:335.3px;top:687.2px;width:152px;height:24.5px;border:1.5px solid #ee3b48;background:linear-gradient(#f0f0f0,#e0e0e0);box-shadow:inset 0 0 0 1px #c8b8b8;"></div>
<svg class="a" style="left:472px;top:696.2px;" width="8" height="6" viewBox="0 0 8 6"><path d="M1 1.3 L4 4.3 L7 1.3" fill="none" stroke="#666" stroke-width="1.2"/></svg>
<div class="a" style="left:335.3px;top:715.4px;width:152px;height:24.5px;border:1.5px solid #ee3b48;background:linear-gradient(#f0f0f0,#e0e0e0);box-shadow:inset 0 0 0 1px #c8b8b8;"></div>
<svg class="a" style="left:472px;top:724.4px;" width="8" height="6" viewBox="0 0 8 6"><path d="M1 1.3 L4 4.3 L7 1.3" fill="none" stroke="#666" stroke-width="1.2"/></svg>
<div class="a" style="left:335.3px;top:740.8px;width:252.0px;height:77.0px;border:1.5px solid #ee3b48;background:#ffb6c1;box-shadow:inset 0 0 0 1px #e79aa6;"></div>
<div class="a" style="left:491px;top:660.8px;width:78px;height:22.5px;border:1px solid #aab6c4;border-radius:2px;background:#fff;"></div>
<div class="t" id="tm" style="left:497px;top:665.5px;font-size:12px;line-height:14px;color:#222;letter-spacing:-0.28px;">12:00 AM</div>
<div class="a" style="left:552.5px;top:662px;width:16px;height:10px;border:1px solid #9a9a9a;border-radius:2px;background:linear-gradient(#f4f4f4,#dcdcdc);"></div>
<div class="a" style="left:552.5px;top:672px;width:16px;height:10px;border:1px solid #9a9a9a;border-radius:2px;background:linear-gradient(#f4f4f4,#dcdcdc);"></div>
<svg class="a" style="left:556px;top:664px;" width="9" height="6" viewBox="0 0 9 6"><path d="M0.8 5 L4.5 1.3 L8.2 5" fill="none" stroke="#111" stroke-width="2"/></svg>
<svg class="a" style="left:556px;top:674.5px;" width="9" height="6" viewBox="0 0 9 6"><path d="M0.8 1 L4.5 4.7 L8.2 1" fill="none" stroke="#111" stroke-width="2"/></svg>
<div class="a" style="left:569px;top:661px;width:16.5px;height:22.5px;border:1px solid #8a8a8a;border-radius:3px;background:linear-gradient(#f6f6f6,#d8d8d8);"></div>
<svg class="a" style="left:573px;top:669.5px;" width="9" height="6" viewBox="0 0 9 6"><path d="M0.8 1 L4.5 4.7 L8.2 1" fill="none" stroke="#111" stroke-width="2"/></svg>
<div class="a" style="left:706px;top:604.6px;width:125px;height:23.2px;border:1px solid #acacac;background:linear-gradient(#f0f0f0,#e4e4e4);"></div>
<svg class="a" style="left:817.5px;top:612.1px;" width="8" height="6" viewBox="0 0 8 6"><path d="M1.2 1.2 L4 4 L6.8 1.2" fill="none" stroke="#555" stroke-width="1.4"/></svg>
<div class="a" style="left:706px;top:632.9px;width:125px;height:23.2px;border:1px solid #acacac;background:linear-gradient(#f0f0f0,#e4e4e4);"></div>
<svg class="a" style="left:817.5px;top:640.4px;" width="8" height="6" viewBox="0 0 8 6"><path d="M1.2 1.2 L4 4 L6.8 1.2" fill="none" stroke="#555" stroke-width="1.4"/></svg>
<div class="a" style="left:706px;top:660.6px;width:125px;height:23.2px;border:1px solid #acacac;background:linear-gradient(#f0f0f0,#e4e4e4);"></div>
<svg class="a" style="left:817.5px;top:668.1px;" width="8" height="6" viewBox="0 0 8 6"><path d="M1.2 1.2 L4 4 L6.8 1.2" fill="none" stroke="#555" stroke-width="1.4"/></svg>
<div class="t" style="left:711px;top:665px;font-size:12px;line-height:14px;color:#333;">1</div>
<div class="a" style="left:836.6px;top:608.8px;width:14px;height:14px;border:1px solid #505050;background:#fff;"></div>
<div class="a" style="left:706.5px;top:688.8px;width:324.5px;height:124.6px;border:1px solid #acacac;background:#fff;"></div>
<div class="t" id="st" style="left:1403.5px;top:829px;font-size:13px;font-style:italic;line-height:14px;color:#222;letter-spacing:-0.80px;">Transfers Listed: 5</div>
<div class="a" style="left:209px;top:573px;width:835px;height:261px;border:5px solid #ff3f0f;"></div>
</body></html>
